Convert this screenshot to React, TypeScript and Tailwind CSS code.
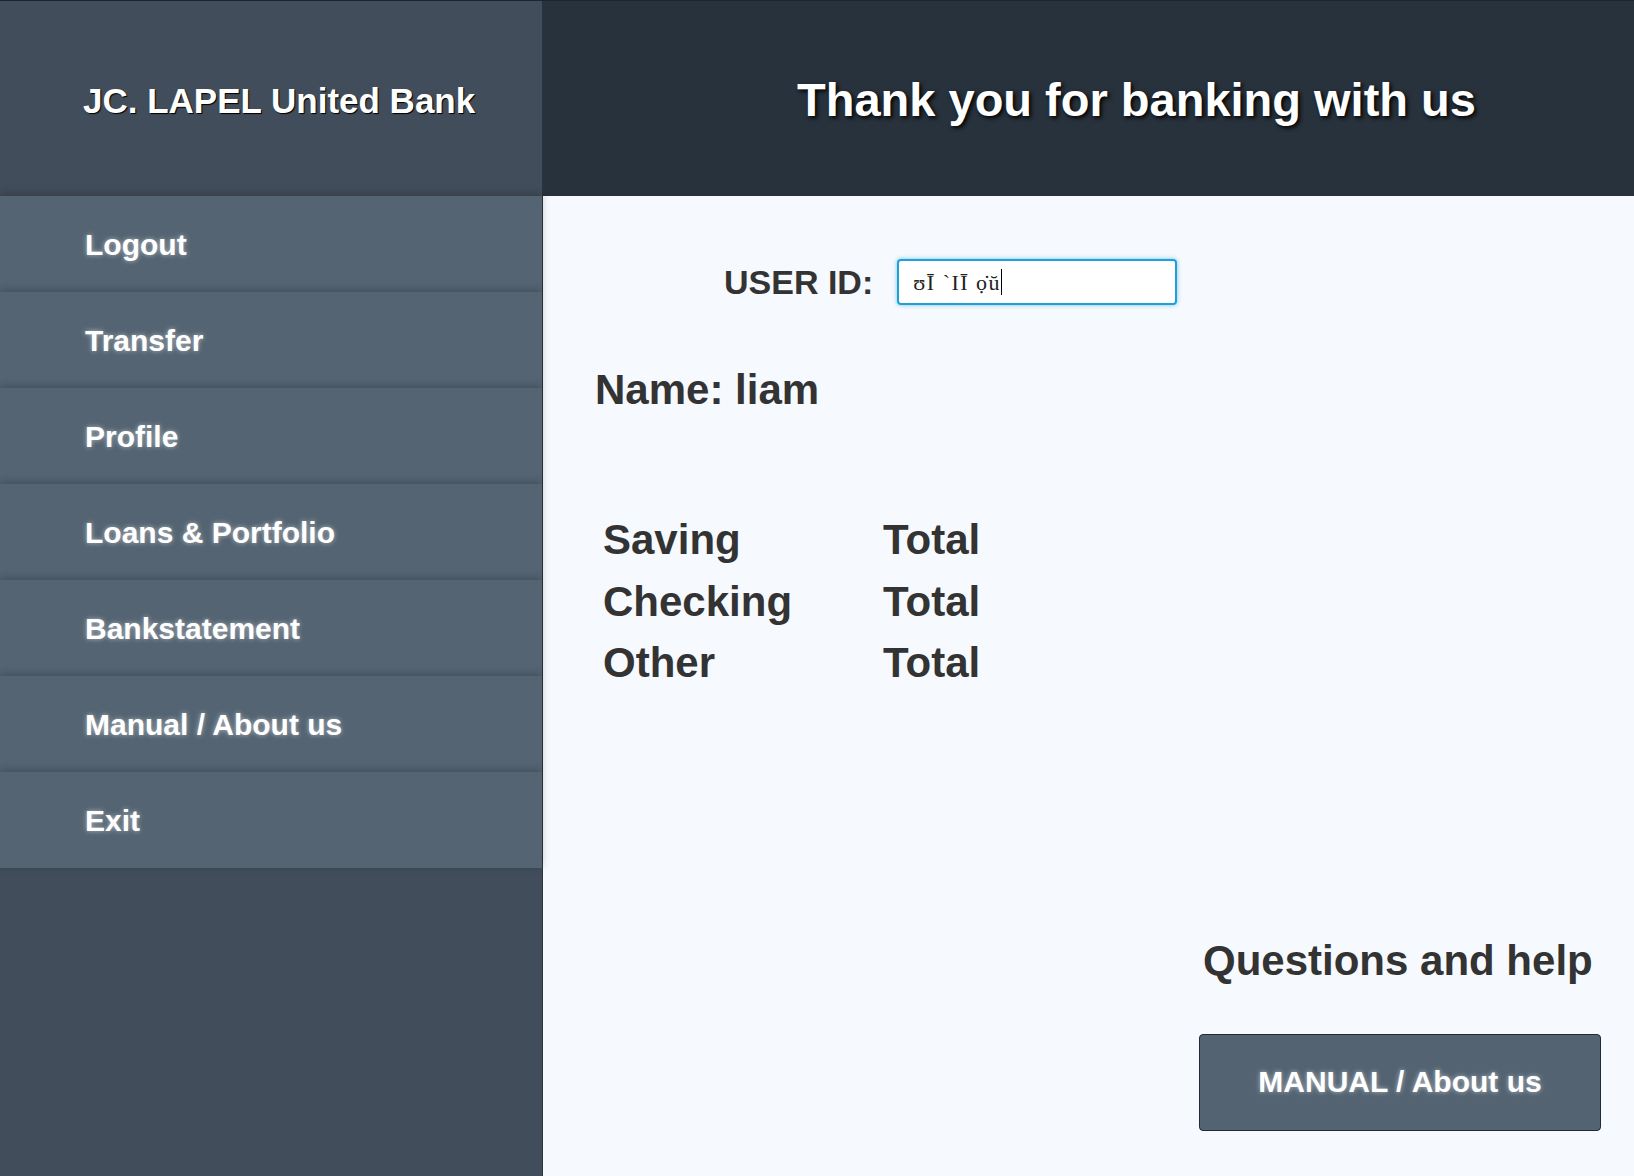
import React from "react";

const menu = [
  "Logout",
  "Transfer",
  "Profile",
  "Loans & Portfolio",
  "Bankstatement",
  "Manual / About us",
  "Exit",
];

export default function App() {
  return (
    <div
      className="flex h-[1176px] w-[1634px] overflow-hidden border-t border-[#1e252c] bg-[#f6f9fd]"
      style={{ fontFamily: '"Liberation Sans", Arial, Helvetica, sans-serif' }}
    >
      {/* Sidebar */}
      <div className="flex w-[543px] shrink-0 flex-col border-r border-[#2b3540] bg-[#414d5a]">
        <div className="flex h-[195px] items-center pl-[83px] pt-[5px]">
          <h1 className="text-[35px] font-bold text-white [text-shadow:1px_1px_1px_#000]">
            JC. LAPEL United Bank
          </h1>
        </div>
        <nav className="flex flex-col">
          {menu.map((m) => (
            <div
              key={m}
              className="relative flex h-[96px] items-center bg-[#546472] pl-[85px] shadow-[0_-2px_8px_rgba(0,0,0,0.22)]"
            >
              <span className="text-[30px] font-bold text-white [text-shadow:0_0_5px_rgba(255,255,255,0.55)]">
                {m}
              </span>
            </div>
          ))}
        </nav>
      </div>

      {/* Main */}
      <div className="flex flex-1 flex-col">
        <div className="flex h-[195px] items-center justify-center bg-[#28323c] pl-[96px] pt-[3px]">
          <h2 className="text-[47px] font-bold text-white [text-shadow:2px_2px_4px_#000]">
            Thank you for banking with us
          </h2>
        </div>

        <div className="flex flex-1 flex-col text-[#333333]">
          <div className="ml-[181px] mt-[63px] flex h-[46px] items-center gap-[24px]">
            <label className="text-[34px] font-bold">USER ID:</label>
            <div className="flex h-[46px] w-[280px] items-center rounded-[4px] border-2 border-[#1ea0d8] bg-white pl-[14px] shadow-[0_0_4px_rgba(30,160,216,0.6)]">
              <span
                className="text-[22px] tracking-[1.5px] text-[#222]"
                style={{ fontFamily: '"Liberation Serif", "DejaVu Serif", serif' }}
              >
                ʊĪ ˋIĪ ọ̇ŭ
              </span>
              <span className="h-[26px] w-[1px] bg-black" />
            </div>
          </div>

          <div className="ml-[52px] mt-[61px] text-[42px] font-bold leading-[48px]">
            Name: liam
          </div>

          <div className="ml-[60px] mt-[95px] grid grid-cols-[280px_auto] text-[42px] font-bold leading-[61.5px]">
            <div>Saving</div>
            <div>Total</div>
            <div>Checking</div>
            <div>Total</div>
            <div>Other</div>
            <div>Total</div>
          </div>

          <div className="mb-[45px] mr-[33px] mt-auto flex flex-col self-end">
            <div className="pl-[4px] text-[42px] font-bold leading-[48px]">
              Questions and help
            </div>
            <button className="mt-[49px] flex h-[97px] w-[402px] items-center justify-center rounded-[4px] border border-[#1f2b38] bg-[#536372] pb-[3px] text-[30px] font-bold text-white [text-shadow:0_0_5px_rgba(255,255,255,0.55)]">
              MANUAL / About us
            </button>
          </div>
        </div>
      </div>
    </div>
  );
}
